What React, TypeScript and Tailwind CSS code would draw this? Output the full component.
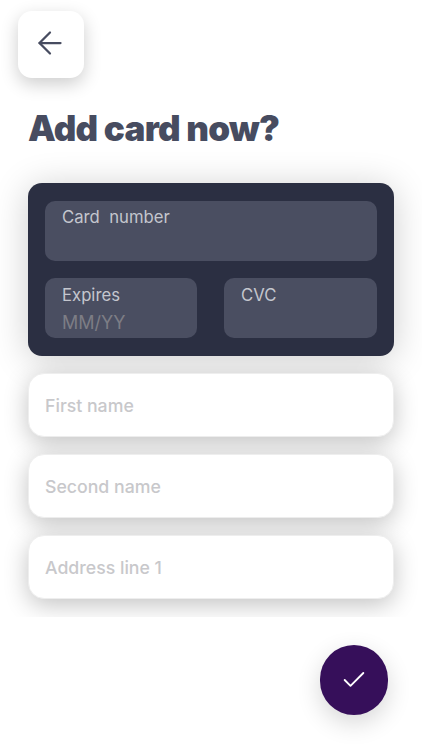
import { ArrowLeft, Check } from 'lucide-react'

const sans = 'font-["Inter",sans-serif]'

function CardInput({ label, hint, className }: { label: string; hint?: string; className: string }) {
  return (
    <div className={`h-[60px] rounded-[10px] bg-[#4a4e61] pl-[17px] ${className}`}>
      <div className="text-[16.7px] leading-[22px] text-[#c4c6ce]">{label}</div>
      {hint && <div className="mt-[5px] text-[18px] leading-[24px] text-[#7d7d85]">{hint}</div>}
    </div>
  )
}

function NameField({ placeholder }: { placeholder: string }) {
  return (
    <div className="flex h-[64px] items-center rounded-[16px] border border-[#eeeeee] bg-white pl-[16px] pt-[2px] text-[17.7px] font-medium text-[#c8c8cb] shadow-[0_6px_24px_rgba(0,0,0,0.24)]">
      {placeholder}
    </div>
  )
}

export default function App() {
  return (
    <div className={`flex h-[750px] w-[422px] flex-col overflow-hidden bg-white ${sans}`}>
      <div className="pl-[18px] pt-[11px]">
        <button className="flex h-[67px] w-[66px] items-center justify-center rounded-[14px] bg-white shadow-[0_6px_18px_rgba(0,0,0,0.2)]">
          <ArrowLeft size={36} strokeWidth={1.5} color="#474c60" className="-translate-x-px -translate-y-0.5" />
        </button>
      </div>
      <h1 className="ml-[28px] mt-[27px] text-[35px] font-black leading-[46px] tracking-[-0.7px] text-[#474c60]">
        Add card now?
      </h1>
      <div className="flex h-[466px] flex-col gap-[17px] overflow-hidden px-[28px] pt-[32px]">
        <div className="flex flex-col gap-[17px] rounded-[14px] bg-[#2b2f42] px-[17px] py-[18px] shadow-[0_4px_36px_rgba(0,0,0,0.2)]">
          <CardInput label="Card  number" className="whitespace-pre pt-[5px]" />
          <div className="flex justify-between">
            <CardInput label="Expires" hint="MM/YY" className="w-[152px] pt-[6px]" />
            <CardInput label="CVC" className="w-[153px] pt-[6px]" />
          </div>
        </div>
        <NameField placeholder="First name" />
        <NameField placeholder="Second name" />
        <NameField placeholder="Address line 1" />
      </div>
      <div className="flex justify-end pr-[34px] pt-[28px]">
        <button className="flex h-[70px] w-[68px] items-center justify-center rounded-full bg-[#360f5a] shadow-[0_8px_24px_rgba(0,0,0,0.16)]">
          <Check size={28} strokeWidth={1.6} color="#ffffff" />
        </button>
      </div>
    </div>
  )
}
